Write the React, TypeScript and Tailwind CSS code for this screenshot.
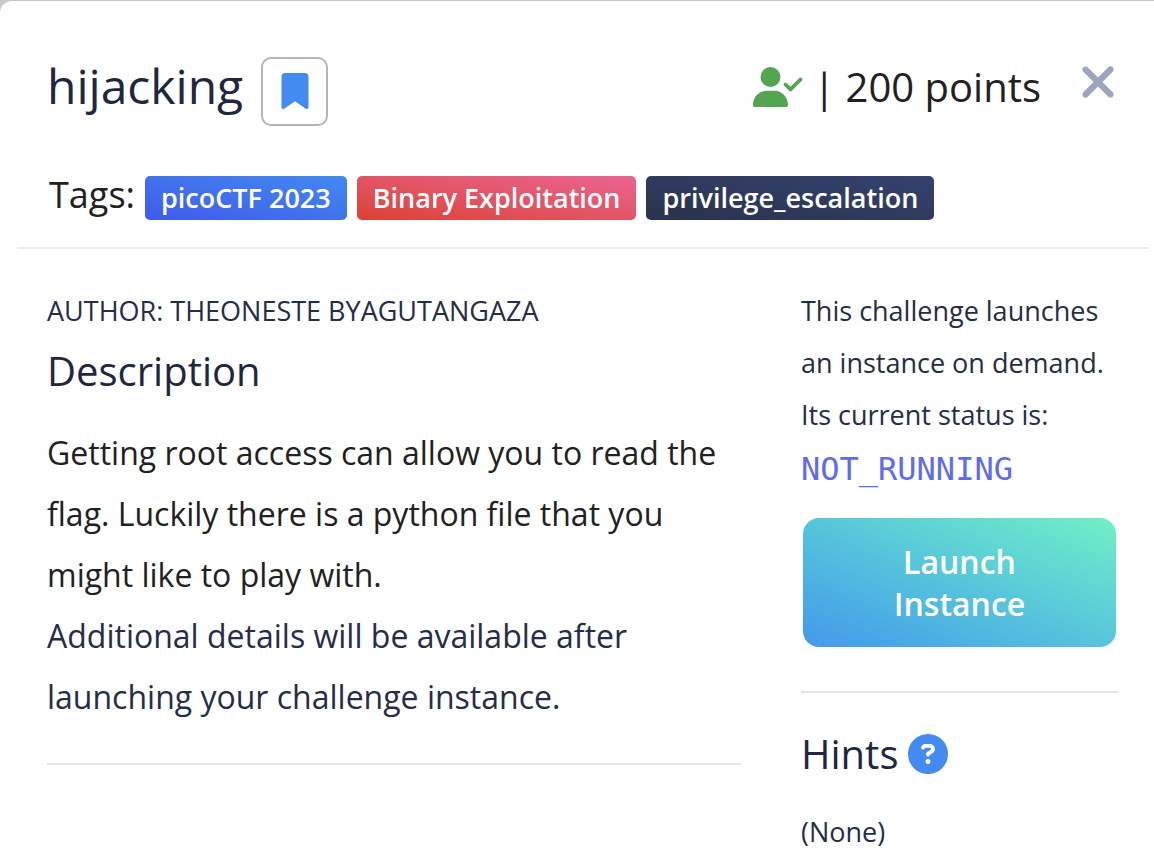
import { FaBookmark, FaCircleQuestion, FaUserCheck, FaXmark } from "react-icons/fa6";

const tags = [
  { label: "picoCTF 2023", style: "from-[#4159ea] to-[#4389f0]" },
  { label: "Binary Exploitation", style: "from-[#dc412f] to-[#ea6492]" },
  { label: "privilege_escalation", style: "from-[#29334c] to-[#364270]" },
];

function Header() {
  return (
    <header className="pt-14 pr-[25px] pl-[30px]">
      <div className="flex items-start justify-between">
        <div className="flex items-start gap-[18px]">
          <h1 className="text-[48px] leading-[58px] text-[#1f273f]">hijacking</h1>
          <button
            type="button"
            aria-label="Bookmark challenge"
            className="flex h-[69px] w-[67px] justify-center rounded-[10px] border-2 border-[#b0b6be] pt-[14px]"
          >
            <FaBookmark className="size-9 text-[#438bf1]" />
          </button>
        </div>
        <div className="flex items-start">
          <p className="flex items-center text-[40px] leading-[60px] text-[#212121]">
            <FaUserCheck className="mr-[10px] h-10 w-[50px] text-[#53a551]" />
            <span>| 200 points</span>
          </p>
          <button type="button" aria-label="Close" className="ml-8 text-[#9da4bd]">
            <FaXmark className="size-[50px]" />
          </button>
        </div>
      </div>
      <div className="mt-[50px] flex flex-wrap items-start gap-[10px] pl-[2px]">
        <span className="text-[36px] leading-[38px] text-[#212121]">Tags:</span>
        {tags.map((tag) => (
          <a
            key={tag.label}
            href="#"
            className={`rounded-[5px] bg-linear-to-tr px-4 text-[27px] leading-[44px] font-semibold text-white ${tag.style}`}
          >
            {tag.label}
          </a>
        ))}
      </div>
    </header>
  );
}

function Details() {
  return (
    <section className="px-[30px]">
      <p className="text-[27px] leading-[52px] text-[#252d47]">AUTHOR: THEONESTE BYAGUTANGAZA</p>
      <h2 className="mt-2 text-[40px] leading-[52px] text-[#1f273f]">Description</h2>
      <div className="mt-[25px] text-[32px] leading-[61px]">
        <p className="text-[#212121]">
          Getting root access can allow you to read the flag. Luckily there is a python file that you
          might like to play with.
        </p>
        <p className="text-[#252d47]">
          Additional details will be available after launching your challenge instance.
        </p>
      </div>
      <hr className="mt-9 border-t-2 border-[#e5e5e5]" />
    </section>
  );
}

function Sidebar() {
  return (
    <aside className="px-[30px] text-[27px] leading-[52px] text-[#252d47]">
      <p>This challenge launches an instance on demand.</p>
      <p>Its current status is:</p>
      <code className="block font-['DejaVu_Sans_Mono',monospace] text-[32px] leading-[56px] text-[#5e6bee]">
        NOT_RUNNING
      </code>
      <div className="px-[2px] pt-[21px]">
        <button
          type="button"
          className="min-h-[129px] w-full rounded-2xl bg-linear-to-tr from-[#4598ea] to-[#70f0c5] px-20 text-[32px] leading-[42px] font-semibold text-white"
        >
          Launch Instance
        </button>
      </div>
      <hr className="mt-11 border-t-2 border-[#e5e5e5]" />
      <div className="mt-[35px] flex items-center gap-[10px]">
        <h2 className="text-[40px] leading-[52px] text-[#1f273f]">Hints</h2>
        <button type="button" aria-label="About hints">
          <FaCircleQuestion className="size-10 text-[#438bf1]" />
        </button>
      </div>
      <p className="mt-[26px]">(None)</p>
    </aside>
  );
}

export default function App() {
  return (
    <div className="min-h-screen bg-[#c8c8ca] pt-px font-['Open_Sans',sans-serif]">
      <main className="min-h-[calc(100vh-1px)] rounded-tl-xl bg-white pr-[6px] pl-[17px]">
        <Header />
        <hr className="mt-[27px] border-t-2 border-[#e9ebee]" />
        <div className="grid grid-cols-[2fr_1fr] pt-9">
          <Details />
          <Sidebar />
        </div>
      </main>
    </div>
  );
}
